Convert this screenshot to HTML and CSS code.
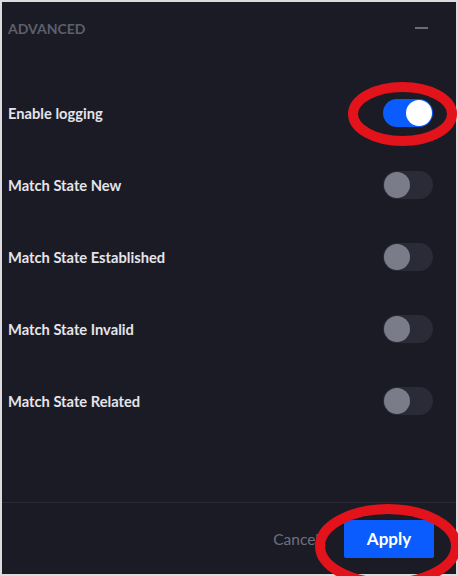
FILE: index.html
```html
<!DOCTYPE html>
<html>
<head>
<meta charset="utf-8">
<link rel="stylesheet" href="styles.css">
</head>
<body>
<div class="panel">
  <div class="header">
    <span class="title">ADVANCED</span>
    <span class="minus"></span>
  </div>
  <div class="rows">
    <div class="row"><span class="label">Enable logging</span><span class="toggle on"><span class="knob"></span></span></div>
    <div class="row"><span class="label">Match State New</span><span class="toggle"><span class="knob"></span></span></div>
    <div class="row"><span class="label">Match State Established</span><span class="toggle"><span class="knob"></span></span></div>
    <div class="row"><span class="label">Match State Invalid</span><span class="toggle"><span class="knob"></span></span></div>
    <div class="row"><span class="label">Match State Related</span><span class="toggle"><span class="knob"></span></span></div>
  </div>
  <div class="spacer"></div>
  <div class="footer">
    <span class="cancel">Cancel</span>
    <span class="apply">Apply</span>
  </div>
</div>
<svg class="marks" width="458" height="576" viewBox="0 0 458 576">
  <ellipse cx="402.5" cy="114" rx="49.5" ry="27" fill="none" stroke="#e3131b" stroke-width="10"/>
  <ellipse cx="388" cy="546" rx="68" ry="37" fill="none" stroke="#e3131b" stroke-width="10"/>
</svg>
</body>
</html>
```
FILE: styles.css
```css
html, body {
  margin: 0;
  padding: 0;
}
body {
  width: 458px;
  height: 576px;
  background: #dcdcdf;
  position: relative;
  overflow: hidden;
  font-family: Lato, "Open Sans", sans-serif;
}
.panel {
  position: absolute;
  left: 2px;
  top: 2px;
  width: 454px;
  height: 572px;
  background: #1b1b26;
  display: flex;
  flex-direction: column;
}
.header {
  height: 52px;
  display: flex;
  align-items: center;
  justify-content: space-between;
  padding: 0 28px 0 6px;
}
.title {
  font-weight: 700;
  font-size: 14px;
  color: #5d5f6b;
}
.minus {
  width: 13px;
  height: 2px;
  background: #6a6c77;
}
.rows {
  padding-top: 23px;
  display: flex;
  flex-direction: column;
}
.row {
  height: 72px;
  display: flex;
  align-items: center;
  justify-content: space-between;
  padding: 0 23px 0 6px;
}
.label {
  font-weight: 700;
  font-size: 14.7px;
  color: #e4e4ea;
}
.toggle {
  width: 50px;
  height: 28px;
  border-radius: 14px;
  background: #2a2b36;
  display: flex;
  align-items: center;
  padding: 0 1px;
  box-sizing: border-box;
}
.knob {
  width: 26px;
  height: 26px;
  border-radius: 50%;
  background: #7a7c89;
}
.toggle.on {
  background: #0a5cff;
  justify-content: flex-end;
}
.toggle.on .knob {
  background: #ffffff;
}
.spacer {
  flex: 1;
}
.footer {
  height: 72px;
  border-top: 1px solid #2a2b36;
  display: flex;
  align-items: center;
  justify-content: flex-end;
  padding-right: 22px;
  gap: 25px;
  box-sizing: border-box;
}
.cancel {
  font-size: 15.5px;
  color: #6e707c;
}
.apply {
  width: 90px;
  height: 38px;
  background: #0a5cff;
  color: #ffffff;
  font-weight: 700;
  font-size: 17px;
  display: flex;
  align-items: center;
  justify-content: center;
  border-radius: 2px;
}
.marks {
  position: absolute;
  left: 0;
  top: 0;
  pointer-events: none;
}
```
